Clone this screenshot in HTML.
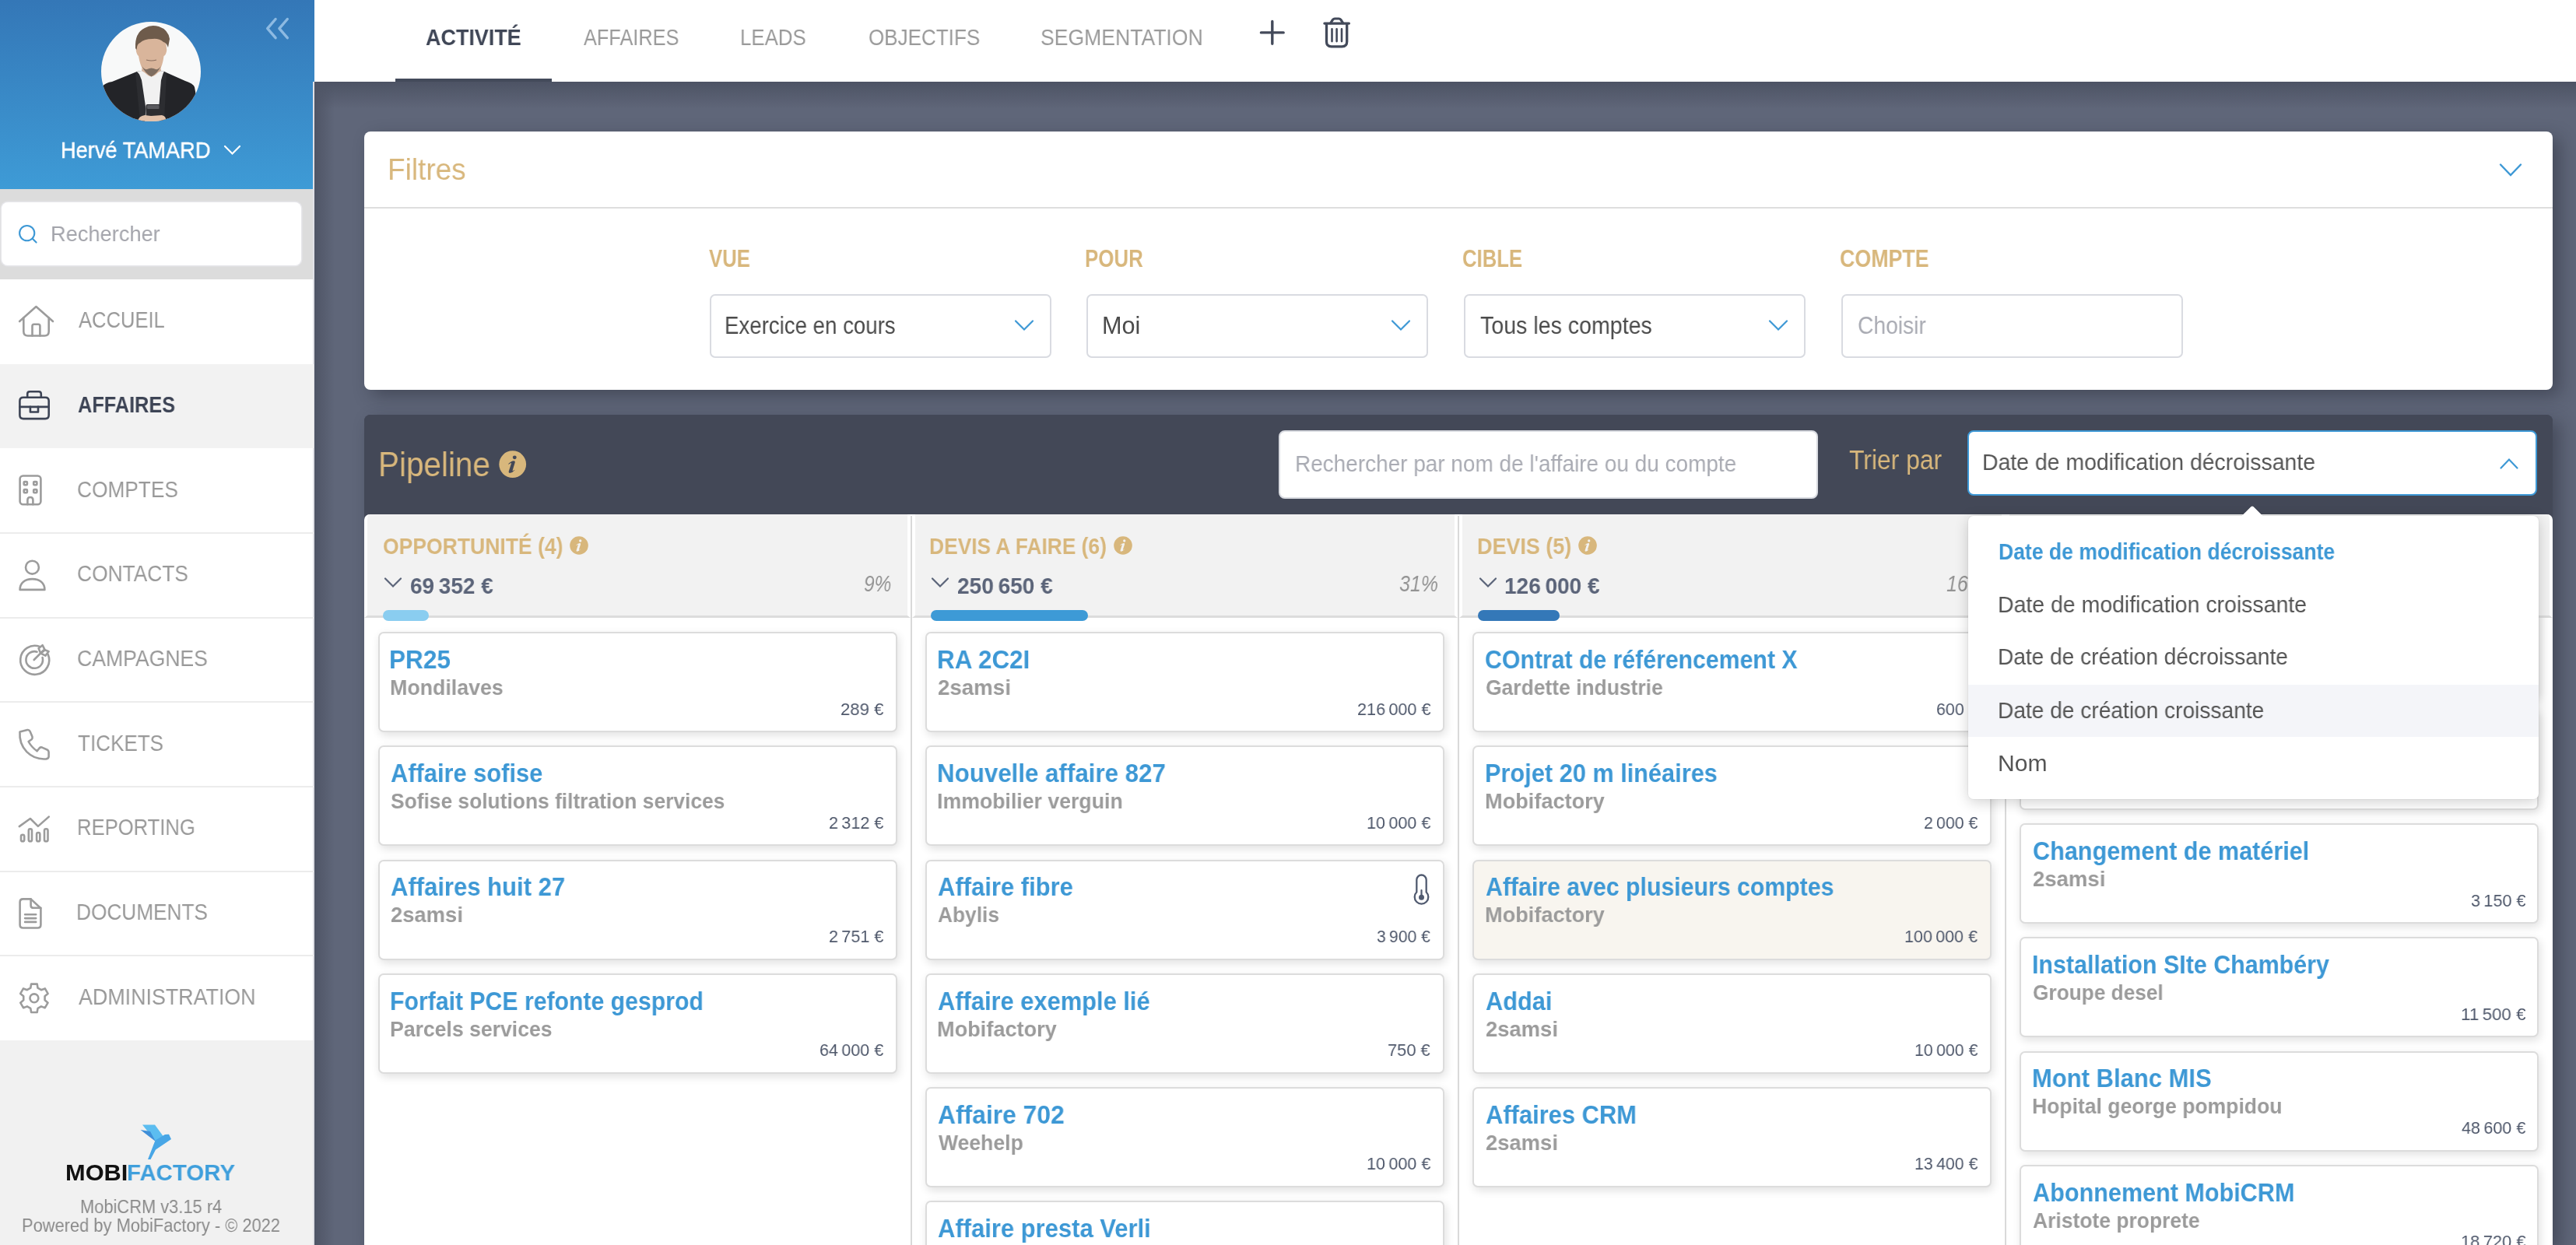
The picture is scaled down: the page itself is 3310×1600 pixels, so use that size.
<!DOCTYPE html>
<html><head><meta charset="utf-8"><style>
html,body{margin:0;padding:0;}
body{width:3310px;height:1600px;position:relative;overflow:hidden;background:#5f6679;font-family:"Liberation Sans",sans-serif;}
.r{position:absolute;}
.t{position:absolute;white-space:nowrap;line-height:1;transform-origin:0 0;will-change:transform;}
</style></head><body>
<div class="r" style="left:404.00px;top:105.00px;width:2906.00px;height:1495.00px;background:#5f6679;"></div>
<div class="r" style="left:404.00px;top:105.00px;width:2906.00px;height:35.00px;background:linear-gradient(#4d5364,rgba(95,102,121,0));"></div>
<div class="r" style="left:404.00px;top:105.00px;width:26.00px;height:1495.00px;background:linear-gradient(90deg,#4f5566,rgba(95,102,121,0));"></div>
<div class="r" style="left:404.00px;top:0.00px;width:2906.00px;height:105.00px;background:#fff;"></div>
<div class="r" style="left:508.00px;top:101.00px;width:201.00px;height:4.00px;background:#434a5a;"></div>
<div class="t" style="left:547.30px;top:32.89px;font-size:29.420px;color:#3f4656;font-weight:700;transform:scaleX(0.9160);">ACTIVITÉ</div>
<div class="t" style="left:749.65px;top:32.89px;font-size:29.420px;color:#9a9a9a;transform:scaleX(0.8611);">AFFAIRES</div>
<div class="t" style="left:951.38px;top:32.89px;font-size:29.420px;color:#9a9a9a;transform:scaleX(0.8789);">LEADS</div>
<div class="t" style="left:1115.55px;top:32.89px;font-size:29.420px;color:#9a9a9a;transform:scaleX(0.8850);">OBJECTIFS</div>
<div class="t" style="left:1337.38px;top:32.89px;font-size:29.420px;color:#9a9a9a;transform:scaleX(0.9039);">SEGMENTATION</div>
<svg class="r" style="left:1610px;top:17px" width="50" height="50" viewBox="0 0 50 50"><path d="M24.8 10.5V39.3M10.4 24.9H39.2" stroke="#434a5a" stroke-width="3.4" stroke-linecap="round" fill="none"/></svg>
<svg class="r" style="left:1690px;top:15px" width="60" height="60" viewBox="0 0 60 60"><g stroke="#434a5a" fill="none" stroke-linecap="round" stroke-linejoin="round"><path d="M11.9 15.1H43.4" stroke-width="3.3"/><path d="M19.8 14.6L22.6 10.2Q23.6 9 25 9H30.4Q31.8 9 32.8 10.2L35.6 14.6" stroke-width="3.2"/><path d="M14.5 17V38.5Q14.5 44.8 20.8 44.8H34.4Q40.7 44.8 40.7 38.5V17" stroke-width="3.3"/><path d="M21.5 22.4V38.1M27.6 22.4V38.1M34 22.4V38.1" stroke-width="2.6"/></g></svg>
<div class="r" style="left:0.00px;top:0.00px;width:404.00px;height:243.00px;background:linear-gradient(#3477b7,#3e9bd6);"></div>
<div class="r" style="left:0.00px;top:243.00px;width:404.00px;height:116.00px;background:#dcdcdc;"></div>
<div class="r" style="left:0.00px;top:359.00px;width:404.00px;height:978.00px;background:#fff;"></div>
<div class="r" style="left:0.00px;top:1337.00px;width:404.00px;height:263.00px;background:#f1f1f1;"></div>
<div class="r" style="left:402.00px;top:105.00px;width:2.00px;height:1495.00px;background:#e0e1e7;"></div>
<svg class="r" style="left:338px;top:20px" width="38" height="34" viewBox="0 0 38 34"><path d="M16.1 4.5L5.7 16.7L16.1 28.6M31.3 4.5L20.9 16.7L31.3 28.6" stroke="#8dbae2" stroke-width="3.4" fill="none" stroke-linecap="round" stroke-linejoin="round"/></svg>
<svg class="r" style="left:130px;top:28px" width="128" height="128" viewBox="0 0 128 128">
<defs><clipPath id="cc"><circle cx="64" cy="64" r="64"/></clipPath></defs>
<circle cx="64" cy="64" r="64" fill="#f8f9f9"/>
<g clip-path="url(#cc)">
<path d="M0 84Q6 78 14 77L46 64L64 62L81 64L108 76Q118 79 120 84L128 128H0Z" fill="#232428"/>
<path d="M47.5 63.5L64 82L80.5 63.5L75 128H56Z" fill="#f1f1f1"/>
<path d="M47.5 63.5L52 75L57.5 112L56 128H50L44 66Z" fill="#2c2d31"/>
<path d="M80.5 63.5L77 75L74 112L75 128H81L84 66Z" fill="#2c2d31"/>
<path d="M46 64L64 61L81 64L64 84Z" fill="#f1f1f1"/><path d="M53 56L76 56L77 63L64 70L52 63Z" fill="#d2b39e"/>
<path d="M45 34Q44 38 47 43L48 44Q50 56 54 62Q59 70 64.5 70.5Q70 70 75 62Q79 56 80.5 44L82 43Q85 38 84 34Q84 18 64 16Q45 18 45 34Z" fill="#d9b59b"/>
<path d="M52 56Q56 66 64.5 70.5Q73 66 77 56Q74 62 70 61Q64.5 58 59 61Q55 62 52 56Z" fill="#7e6d60"/>
<path d="M58 49Q64.5 51 71 49" stroke="#8a6f60" stroke-width="1.2" fill="none"/>
<path d="M44 34Q43 14 56 8Q64 3 74 6Q86 10 88 22L86 33Q84 27 80 26Q74 21 66 22Q55 22 50 27Q46 28 45.5 36Z" fill="#6e5b4b"/>
<rect x="57.5" y="106" width="18.5" height="16" rx="2" fill="#2e2e31"/>
<rect x="59" y="107" width="15.5" height="5" rx="1" fill="#5a5a5e"/>
<path d="M47 128Q48 121 56 120L64 121L78 120Q84 121 83 128Z" fill="#e3c2aa"/>
</g></svg>
<div class="t" style="left:78.07px;top:179.39px;font-size:28.841px;color:#ffffff;transform:scaleX(0.9435);-webkit-text-stroke:0.4px #fff;">Hervé TAMARD</div>
<svg class="r" style="left:286px;top:185px" width="25" height="16" viewBox="0 0 25 16"><path d="M3 3L12.5 12.5L22 3" stroke="#fff" stroke-width="2.2" fill="none" stroke-linecap="round"/></svg>
<div class="r" style="left:2.00px;top:260.00px;width:385.00px;height:81.00px;background:#fff;border-radius:8px;box-shadow:0 0 0 1.5px #e6e6ea;"></div>
<svg class="r" style="left:22px;top:287px" width="28" height="28" viewBox="0 0 28 28"><circle cx="12.7" cy="12.6" r="9.6" stroke="#3d98d5" stroke-width="2.1" fill="none"/><path d="M19.8 19.8L24.6 24.6" stroke="#3d98d5" stroke-width="2.1" stroke-linecap="round"/></svg>
<div class="t" style="left:64.57px;top:287.12px;font-size:27.971px;color:#a3a4ab;transform:scaleX(0.9731);">Rechercher</div>
<div class="r" style="left:0.00px;top:467.67px;width:403.00px;height:108.67px;background:#f2f2f2;"></div>
<div class="r" style="left:0.00px;top:684.00px;width:403.00px;height:2.00px;background:#ececec;"></div>
<div class="r" style="left:0.00px;top:792.67px;width:403.00px;height:2.00px;background:#ececec;"></div>
<div class="r" style="left:0.00px;top:901.33px;width:403.00px;height:2.00px;background:#ececec;"></div>
<div class="r" style="left:0.00px;top:1010.00px;width:403.00px;height:2.00px;background:#ececec;"></div>
<div class="r" style="left:0.00px;top:1118.67px;width:403.00px;height:2.00px;background:#ececec;"></div>
<div class="r" style="left:0.00px;top:1227.33px;width:403.00px;height:2.00px;background:#ececec;"></div>
<div class="t" style="left:100.55px;top:397.35px;font-size:29.275px;color:#999999;transform:scaleX(0.8730);">ACCUEIL</div>
<div class="t" style="left:99.94px;top:506.02px;font-size:29.275px;color:#3d4455;font-weight:700;transform:scaleX(0.8638);">AFFAIRES</div>
<div class="t" style="left:99.29px;top:614.68px;font-size:29.275px;color:#999999;transform:scaleX(0.8973);">COMPTES</div>
<div class="t" style="left:99.28px;top:723.35px;font-size:29.275px;color:#999999;transform:scaleX(0.8998);">CONTACTS</div>
<div class="t" style="left:99.27px;top:832.02px;font-size:29.275px;color:#999999;transform:scaleX(0.9083);">CAMPAGNES</div>
<div class="t" style="left:100.03px;top:940.68px;font-size:29.275px;color:#999999;transform:scaleX(0.8901);">TICKETS</div>
<div class="t" style="left:98.50px;top:1049.35px;font-size:29.275px;color:#999999;transform:scaleX(0.8750);">REPORTING</div>
<div class="t" style="left:98.45px;top:1158.02px;font-size:29.275px;color:#999999;transform:scaleX(0.8959);">DOCUMENTS</div>
<div class="t" style="left:100.55px;top:1266.68px;font-size:29.275px;color:#999999;transform:scaleX(0.9168);">ADMINISTRATION</div>
<svg class="r" style="left:0;top:0" width="404" height="1600" viewBox="0 0 404 1600"><g fill="none" stroke-width="2.6" stroke-linejoin="round" stroke-linecap="round"><g stroke="#9c9c9c"><path d="M25.1 413L46.4 394L68 413"/><path d="M30.3 408.6V426Q30.3 431.5 35.8 431.5H57.2Q62.7 431.5 62.7 426V408.6"/><path d="M41.5 431.5V419Q41.5 416.8 43.7 416.8H49.2Q51.4 416.8 51.4 419V431.5"/></g><g stroke="#3d4455"><path d="M30 510.7H58.1Q62.7 510.7 62.7 515.3V533.5Q62.7 538.1 58.1 538.1H30Q25.4 538.1 25.4 533.5V515.3Q25.4 510.7 30 510.7Z"/><path d="M35.2 510.7V506.2Q35.2 503.2 38.2 503.2H49.8Q52.8 503.2 52.8 506.2V510.7"/><path d="M25.4 522.9H62.7"/><path d="M38.9 522.9V529.5H49V522.9"/></g><g stroke="#9c9c9c"><rect x="25.6" y="611.5" width="26.8" height="36.7" rx="4"/><rect x="30.7" y="619.1" width="4.2" height="4.2" rx="1"/><rect x="43.2" y="619.1" width="4.2" height="4.2" rx="1"/><rect x="30.7" y="629.1" width="4.2" height="4.2" rx="1"/><rect x="43.2" y="629.1" width="4.2" height="4.2" rx="1"/><path d="M35.4 648.2V642.5Q35.4 639 38.9 639Q42.4 639 42.4 642.5V648.2"/></g><g stroke="#9c9c9c"><circle cx="41.45" cy="729.15" r="8.45"/><path d="M25.6 757.9C25.6 749 32 744.1 41.5 744.1C51 744.1 57.4 749 57.4 757.9Z"/></g><g stroke="#9c9c9c"><path d="M61.7 841A18.5 18.5 0 1 1 51 830.9"/><path d="M54.6 845A10.8 10.8 0 1 1 47.5 837.7"/><path d="M43.7 848L56 835.7"/><path d="M52.2 839.5L49.6 833.2L54.6 829.2L57.6 835.2Z"/><path d="M52.2 839.5L57.6 835.2L62.6 837.2L58.4 842.6Z"/></g><g stroke="#9c9c9c"><path d="M25.5 940.5L35.2 938Q37.5 937.6 38.5 939.8L41.5 946.8Q42.1 948.8 40.6 950.2L36.6 953Q40.5 960.2 47.6 965.3L50.6 961.5Q52 960 54.1 960.6L60.6 963.5Q62.6 964.5 62.6 966.6L62.6 972.5Q62.2 975.1 59.2 975.4Q44.5 976.5 34.3 966.2Q24.3 955.6 25.5 940.5Z"/></g><g stroke="#9c9c9c"><path d="M24.8 1062.1L38.9 1052L48.9 1061.9L62.8 1049.6"/><rect x="27" y="1072.7" width="4.2" height="8.6" rx="2.1"/><rect x="36.8" y="1065.2" width="4.2" height="16.1" rx="2.1"/><rect x="47.1" y="1070" width="4.2" height="11.3" rx="2.1"/><rect x="57" y="1065.2" width="4.5" height="16.1" rx="2.1"/></g><g stroke="#9c9c9c"><path d="M29.6 1155.4H39.6L52.4 1167.2V1188.5Q52.4 1192.5 48.4 1192.5H29.6Q25.6 1192.5 25.6 1188.5V1159.4Q25.6 1155.4 29.6 1155.4Z"/><path d="M39.6 1155.4V1163.4Q39.6 1166.8 43 1166.8H52.4"/><path d="M32.1 1175.3H46.2M32.1 1180.1H46.2M32.1 1184.9H46.2"/></g><g stroke="#9c9c9c"><circle cx="43.9" cy="1282.8" r="5.45"/><path d="M39.26 1269.70 L40.13 1264.59 L47.67 1264.59 L48.54 1269.70 L52.93 1272.23 L57.79 1270.43 L61.56 1276.96 L57.57 1280.27 L57.57 1285.33 L61.56 1288.64 L57.79 1295.17 L52.93 1293.37 L48.54 1295.90 L47.67 1301.01 L40.13 1301.01 L39.26 1295.90 L34.87 1293.37 L30.01 1295.17 L26.24 1288.64 L30.23 1285.33 L30.23 1280.27 L26.24 1276.96 L30.01 1270.43 L34.87 1272.23Z"/></g></g></svg>
<svg class="r" style="left:179.6px;top:1444.8px" width="41" height="46" viewBox="0 0 41 46">
<path d="M3 0.5L19 0.5L31 17L20 22Z" fill="#5cbdf0"/>
<path d="M0.5 7L13 9L20 22Z" fill="#3f8fd8"/>
<path d="M19.5 20.5L32 13L37 12.8L40 19L20 32.5L13.5 45H10Z" fill="#48a6e6"/>
</svg>
<div class="t" style="left:83.77px;top:1492.10px;font-size:30.000px;color:#111111;font-weight:700;transform:scaleX(1.0255);">MOBI</div>
<div class="t" style="left:162.86px;top:1492.10px;font-size:30.000px;color:#3f9fdc;font-weight:700;transform:scaleX(0.9813);">FACTORY</div>
<div class="t" style="left:102.61px;top:1538.56px;font-size:24.638px;color:#8a8a8a;transform:scaleX(0.8877);">MobiCRM v3.15 r4</div>
<div class="t" style="left:27.51px;top:1563.46px;font-size:24.638px;color:#8a8a8a;transform:scaleX(0.8877);">Powered by MobiFactory - © 2022</div>
<div class="r" style="left:468.00px;top:169.00px;width:2812.00px;height:331.50px;background:#fff;border-radius:8px;box-shadow:9px 8px 22px rgba(25,28,40,0.38);"></div>
<div class="r" style="left:468.00px;top:266.00px;width:2812.00px;height:2.00px;background:#dedede;"></div>
<div class="t" style="left:497.97px;top:199.26px;font-size:38.406px;color:#d8b77c;transform:scaleX(0.9629);">Filtres</div>
<svg class="r" style="left:3210px;top:208px" width="32" height="22" viewBox="0 0 32 22"><path d="M3 3.5L16 17L29 3.5" stroke="#3d98d5" stroke-width="2.4" fill="none" stroke-linecap="round"/></svg>
<div class="t" style="left:910.85px;top:316.73px;font-size:30.435px;color:#d8b77c;font-weight:700;transform:scaleX(0.8459);">VUE</div>
<div class="r" style="left:911.50px;top:377.60px;width:439.00px;height:82.40px;background:#fff;border:2px solid #d9dbe1;border-radius:7px;box-sizing:border-box;"></div>
<div class="t" style="left:931.43px;top:403.43px;font-size:30.435px;color:#4b4b4b;transform:scaleX(0.9085);">Exercice en cours</div>
<svg class="r" style="left:1301.5px;top:409px" width="28" height="18" viewBox="0 0 28 18"><path d="M3 3.5L14 14.5L25 3.5" stroke="#3d98d5" stroke-width="2.2" fill="none" stroke-linecap="round"/></svg>
<div class="t" style="left:1393.99px;top:316.73px;font-size:30.435px;color:#d8b77c;font-weight:700;transform:scaleX(0.8507);">POUR</div>
<div class="r" style="left:1396.20px;top:377.60px;width:439.00px;height:82.40px;background:#fff;border:2px solid #d9dbe1;border-radius:7px;box-sizing:border-box;"></div>
<div class="t" style="left:1415.89px;top:403.43px;font-size:30.435px;color:#4b4b4b;transform:scaleX(1.0068);">Moi</div>
<svg class="r" style="left:1786.2px;top:409px" width="28" height="18" viewBox="0 0 28 18"><path d="M3 3.5L14 14.5L25 3.5" stroke="#3d98d5" stroke-width="2.2" fill="none" stroke-linecap="round"/></svg>
<div class="t" style="left:1879.37px;top:316.73px;font-size:30.435px;color:#d8b77c;font-weight:700;transform:scaleX(0.8434);">CIBLE</div>
<div class="r" style="left:1880.90px;top:377.60px;width:439.00px;height:82.40px;background:#fff;border:2px solid #d9dbe1;border-radius:7px;box-sizing:border-box;"></div>
<div class="t" style="left:1901.97px;top:403.43px;font-size:30.435px;color:#4b4b4b;transform:scaleX(0.9393);">Tous les comptes</div>
<svg class="r" style="left:2270.9px;top:409px" width="28" height="18" viewBox="0 0 28 18"><path d="M3 3.5L14 14.5L25 3.5" stroke="#3d98d5" stroke-width="2.2" fill="none" stroke-linecap="round"/></svg>
<div class="t" style="left:2364.03px;top:316.73px;font-size:30.435px;color:#d8b77c;font-weight:700;transform:scaleX(0.8805);">COMPTE</div>
<div class="r" style="left:2365.60px;top:377.60px;width:439.00px;height:82.40px;background:#fff;border:2px solid #d9dbe1;border-radius:7px;box-sizing:border-box;"></div>
<div class="t" style="left:2386.59px;top:403.43px;font-size:30.435px;color:#a9abb3;transform:scaleX(0.9283);">Choisir</div>
<div class="r" style="left:468.00px;top:533.00px;width:2812.00px;height:1067.00px;background:#434857;border-radius:8px 8px 0 0;box-shadow:9px 8px 22px rgba(25,28,40,0.38);"></div>
<div class="r" style="left:468.00px;top:650.00px;width:2812.00px;height:950.00px;background:#fff;"></div>
<div class="r" style="left:468.00px;top:533.00px;width:2812.00px;height:128.00px;background:#434857;border-radius:8px 8px 0 0;"></div>
<div class="r" style="left:468.00px;top:660.00px;width:10.00px;height:10.00px;background:#434857;"></div>
<div class="r" style="left:3270.00px;top:660.00px;width:10.00px;height:10.00px;background:#434857;"></div>
<div class="t" style="left:486.38px;top:576.44px;font-size:43.478px;color:#d8b77c;transform:scaleX(0.9302);">Pipeline</div>
<svg class="r" style="left:641.30px;top:579.20px" width="35.40" height="35.40" viewBox="0 0 36 36"><circle cx="18" cy="18" r="17.7" fill="#d8b77c"/><circle cx="20.6" cy="9" r="2.5" fill="#434857"/><path d="M12.3 17.6Q15.6 13.6 19.6 13.4Q21.6 13.4 21.1 15.6L18 25.6Q17.6 27.2 19.2 26.2L20.4 25.1L20.7 25.6Q17.4 29.4 14.2 29.5Q12.4 29.5 12.9 27.3L16.2 17Q16.5 15.8 15.3 16.6L12.7 18.1Z" fill="#434857"/></svg>
<div class="r" style="left:1643.00px;top:553.00px;width:693.00px;height:87.50px;background:#fff;border:2px solid #d9dbe1;border-radius:8px;box-sizing:border-box;"></div>
<div class="t" style="left:1664.11px;top:581.40px;font-size:30.000px;color:#a9abb3;transform:scaleX(0.9315);">Rechercher par nom de l&#x27;affaire ou du compte</div>
<div class="t" style="left:2375.70px;top:573.92px;font-size:35.507px;color:#d8b77c;transform:scaleX(0.8977);">Trier par</div>
<div class="r" style="left:2527.50px;top:553.40px;width:732.20px;height:83.80px;background:#fff;border:2.5px solid #3d98d5;border-radius:8px;box-sizing:border-box;"></div>
<div class="t" style="left:2547.17px;top:580.36px;font-size:28.986px;color:#555555;transform:scaleX(0.9809);">Date de modification décroissante</div>
<svg class="r" style="left:3210px;top:586px" width="28" height="20" viewBox="0 0 28 20"><path d="M3.5 15.5L14 4.5L24.5 15.5" stroke="#3d98d5" stroke-width="2.2" fill="none" stroke-linecap="round"/></svg>
<div class="r" style="left:468px;top:794px;width:703px;height:806px;overflow:hidden;">
<div class="r" style="left:17.6px;top:18.10px;width:667.5px;height:129px;background:#fff;border:2px solid #dcdcdc;border-radius:7px;box-sizing:border-box;box-shadow:2px 4px 12px rgba(0,0,0,0.12);"></div>
<div class="t" style="left:32.42px;top:38.06px;font-size:32.754px;color:#3d98d5;font-weight:700;transform:scaleX(0.9636);">PR25</div>
<div class="t" style="left:32.73px;top:74.96px;font-size:28.406px;color:#9b9b9b;font-weight:700;transform:scaleX(0.9427);">Mondilaves</div>
<div class="t" style="left:611.69px;top:106.68px;font-size:22.609px;color:#4f586b;transform:scaleX(0.9779);">289 €</div>
<div class="r" style="left:17.6px;top:164.30px;width:667.5px;height:129px;background:#fff;border:2px solid #dcdcdc;border-radius:7px;box-sizing:border-box;box-shadow:2px 4px 12px rgba(0,0,0,0.12);"></div>
<div class="t" style="left:33.70px;top:184.26px;font-size:32.754px;color:#3d98d5;font-weight:700;transform:scaleX(0.9413);">Affaire sofise</div>
<div class="t" style="left:33.71px;top:221.16px;font-size:28.406px;color:#9b9b9b;font-weight:700;transform:scaleX(0.9287);">Sofise solutions filtration services</div>
<div class="t" style="left:596.62px;top:252.88px;font-size:22.609px;color:#4f586b;transform:scaleX(0.9555);">2 312 €</div>
<div class="r" style="left:17.6px;top:310.50px;width:667.5px;height:129px;background:#fff;border:2px solid #dcdcdc;border-radius:7px;box-sizing:border-box;box-shadow:2px 4px 12px rgba(0,0,0,0.12);"></div>
<div class="t" style="left:33.69px;top:330.46px;font-size:32.754px;color:#3d98d5;font-weight:700;transform:scaleX(0.9470);">Affaires huit 27</div>
<div class="t" style="left:33.57px;top:367.36px;font-size:28.406px;color:#9b9b9b;font-weight:700;transform:scaleX(0.9647);">2samsi</div>
<div class="t" style="left:596.62px;top:399.08px;font-size:22.609px;color:#4f586b;transform:scaleX(0.9555);">2 751 €</div>
<div class="r" style="left:17.6px;top:456.70px;width:667.5px;height:129px;background:#fff;border:2px solid #dcdcdc;border-radius:7px;box-sizing:border-box;box-shadow:2px 4px 12px rgba(0,0,0,0.12);"></div>
<div class="t" style="left:32.51px;top:476.66px;font-size:32.754px;color:#3d98d5;font-weight:700;transform:scaleX(0.9224);">Forfait PCE refonte gesprod</div>
<div class="t" style="left:32.74px;top:513.56px;font-size:28.406px;color:#9b9b9b;font-weight:700;transform:scaleX(0.9368);">Parcels services</div>
<div class="t" style="left:584.82px;top:545.28px;font-size:22.609px;color:#4f586b;transform:scaleX(0.9530);">64 000 €</div>
</div>
<div class="r" style="left:468.00px;top:661.00px;width:702.00px;height:132.50px;background:#f2f2f2;border-left:4px solid #fff;border-right:4px solid #fff;border-bottom:3px solid #dcdcdc;box-sizing:border-box;border-top-left-radius:7px;"></div>
<div class="r" style="left:1170.00px;top:662.50px;width:2.00px;height:937.50px;background:#d9d9d9;"></div>
<div class="t" style="left:491.74px;top:687.92px;font-size:29.275px;color:#d8b77c;font-weight:700;transform:scaleX(0.9068);">OPPORTUNITÉ (4)</div>
<svg class="r" style="left:732.00px;top:689.00px" width="24.00" height="24.00" viewBox="0 0 36 36"><circle cx="18" cy="18" r="17.7" fill="#d8b77c"/><circle cx="20.6" cy="9" r="2.5" fill="#f2f2f2"/><path d="M12.3 17.6Q15.6 13.6 19.6 13.4Q21.6 13.4 21.1 15.6L18 25.6Q17.6 27.2 19.2 26.2L20.4 25.1L20.7 25.6Q17.4 29.4 14.2 29.5Q12.4 29.5 12.9 27.3L16.2 17Q16.5 15.8 15.3 16.6L12.7 18.1Z" fill="#f2f2f2"/></svg>
<svg class="r" style="left:492.0px;top:740px" width="26" height="18" viewBox="0 0 26 18"><path d="M3 3.5L13 13.5L23 3.5" stroke="#5b6479" stroke-width="2.2" fill="none" stroke-linecap="round"/></svg>
<div class="t" style="left:526.99px;top:739.26px;font-size:28.986px;color:#5b6479;font-weight:700;transform:scaleX(0.9653);">69 352 €</div>
<div class="t" style="left:1109.97px;top:734.98px;font-size:30.145px;color:#939393;font-style:italic;transform:scaleX(0.8124);">9%</div>
<div class="r" style="left:492.00px;top:784.00px;width:59.00px;height:14.00px;background:#8acdf0;border-radius:7px;"></div>
<div class="r" style="left:1171px;top:794px;width:703px;height:806px;overflow:hidden;">
<div class="r" style="left:17.6px;top:18.10px;width:667.5px;height:129px;background:#fff;border:2px solid #dcdcdc;border-radius:7px;box-sizing:border-box;box-shadow:2px 4px 12px rgba(0,0,0,0.12);"></div>
<div class="t" style="left:32.63px;top:38.06px;font-size:32.754px;color:#3d98d5;font-weight:700;transform:scaleX(0.9594);">RA 2C2I</div>
<div class="t" style="left:33.76px;top:74.96px;font-size:28.406px;color:#9b9b9b;font-weight:700;transform:scaleX(0.9754);">2samsi</div>
<div class="t" style="left:572.62px;top:106.68px;font-size:22.609px;color:#4f586b;transform:scaleX(0.9563);">216 000 €</div>
<div class="r" style="left:17.6px;top:164.30px;width:667.5px;height:129px;background:#fff;border:2px solid #dcdcdc;border-radius:7px;box-sizing:border-box;box-shadow:2px 4px 12px rgba(0,0,0,0.12);"></div>
<div class="t" style="left:32.64px;top:184.26px;font-size:32.754px;color:#3d98d5;font-weight:700;transform:scaleX(0.9550);">Nouvelle affaire 827</div>
<div class="t" style="left:32.94px;top:221.16px;font-size:28.406px;color:#9b9b9b;font-weight:700;transform:scaleX(0.9396);">Immobilier verguin</div>
<div class="t" style="left:584.76px;top:252.88px;font-size:22.609px;color:#4f586b;transform:scaleX(0.9549);">10 000 €</div>
<div class="r" style="left:17.6px;top:310.50px;width:667.5px;height:129px;background:#fff;border:2px solid #dcdcdc;border-radius:7px;box-sizing:border-box;box-shadow:2px 4px 12px rgba(0,0,0,0.12);"></div>
<div class="t" style="left:33.89px;top:330.46px;font-size:32.754px;color:#3d98d5;font-weight:700;transform:scaleX(0.9464);">Affaire fibre</div>
<div class="t" style="left:34.02px;top:367.36px;font-size:28.406px;color:#9b9b9b;font-weight:700;transform:scaleX(0.9263);">Abylis</div>
<div class="t" style="left:598.20px;top:399.08px;font-size:22.609px;color:#4f586b;transform:scaleX(0.9354);">3 900 €</div>
<svg class="r" style="left:629.00px;top:321.00px" width="50" height="55" viewBox="0 0 50 55"><path d="M20.3 31.55V15.7A6.2 6.2 0 0 1 32.7 15.7V31.55A8.8 8.8 0 1 1 20.3 31.55Z" stroke="#515b70" stroke-width="2.3" fill="none"/><circle cx="26.5" cy="38.2" r="3.5" fill="#515b70"/><path d="M26.5 29V36" stroke="#515b70" stroke-width="2.2" stroke-linecap="round"/></svg>
<div class="r" style="left:17.6px;top:456.70px;width:667.5px;height:129px;background:#fff;border:2px solid #dcdcdc;border-radius:7px;box-sizing:border-box;box-shadow:2px 4px 12px rgba(0,0,0,0.12);"></div>
<div class="t" style="left:33.90px;top:476.66px;font-size:32.754px;color:#3d98d5;font-weight:700;transform:scaleX(0.9419);">Affaire exemple lié</div>
<div class="t" style="left:32.91px;top:513.56px;font-size:28.406px;color:#9b9b9b;font-weight:700;transform:scaleX(0.9559);">Mobifactory</div>
<div class="t" style="left:612.46px;top:545.28px;font-size:22.609px;color:#4f586b;transform:scaleX(0.9660);">750 €</div>
<div class="r" style="left:17.6px;top:602.90px;width:667.5px;height:129px;background:#fff;border:2px solid #dcdcdc;border-radius:7px;box-sizing:border-box;box-shadow:2px 4px 12px rgba(0,0,0,0.12);"></div>
<div class="t" style="left:33.87px;top:622.86px;font-size:32.754px;color:#3d98d5;font-weight:700;transform:scaleX(0.9719);">Affaire 702</div>
<div class="t" style="left:34.65px;top:659.76px;font-size:28.406px;color:#9b9b9b;font-weight:700;transform:scaleX(0.9353);">Weehelp</div>
<div class="t" style="left:584.76px;top:691.48px;font-size:22.609px;color:#4f586b;transform:scaleX(0.9549);">10 000 €</div>
<div class="r" style="left:17.6px;top:749.10px;width:667.5px;height:129px;background:#fff;border:2px solid #dcdcdc;border-radius:7px;box-sizing:border-box;box-shadow:2px 4px 12px rgba(0,0,0,0.12);"></div>
<div class="t" style="left:33.89px;top:769.06px;font-size:32.754px;color:#3d98d5;font-weight:700;transform:scaleX(0.9458);">Affaire presta Verli</div>
<div class="t" style="left:34.54px;top:805.96px;font-size:28.406px;color:#9b9b9b;font-weight:700;transform:scaleX(0.9350);">Verli</div>
<div class="t" style="left:595.66px;top:837.68px;font-size:22.609px;color:#4f586b;transform:scaleX(0.9700);">5 000 €</div>
</div>
<div class="r" style="left:1172.00px;top:661.00px;width:701.00px;height:132.50px;background:#f2f2f2;border-left:4px solid #fff;border-right:4px solid #fff;border-bottom:3px solid #dcdcdc;box-sizing:border-box;"></div>
<div class="r" style="left:1873.00px;top:662.50px;width:2.00px;height:937.50px;background:#d9d9d9;"></div>
<div class="t" style="left:1194.16px;top:687.92px;font-size:29.275px;color:#d8b77c;font-weight:700;transform:scaleX(0.9002);">DEVIS A FAIRE (6)</div>
<svg class="r" style="left:1430.80px;top:689.00px" width="24.00" height="24.00" viewBox="0 0 36 36"><circle cx="18" cy="18" r="17.7" fill="#d8b77c"/><circle cx="20.6" cy="9" r="2.5" fill="#f2f2f2"/><path d="M12.3 17.6Q15.6 13.6 19.6 13.4Q21.6 13.4 21.1 15.6L18 25.6Q17.6 27.2 19.2 26.2L20.4 25.1L20.7 25.6Q17.4 29.4 14.2 29.5Q12.4 29.5 12.9 27.3L16.2 17Q16.5 15.8 15.3 16.6L12.7 18.1Z" fill="#f2f2f2"/></svg>
<svg class="r" style="left:1195.0px;top:740px" width="26" height="18" viewBox="0 0 26 18"><path d="M3 3.5L13 13.5L23 3.5" stroke="#5b6479" stroke-width="2.2" fill="none" stroke-linecap="round"/></svg>
<div class="t" style="left:1230.04px;top:739.26px;font-size:28.986px;color:#5b6479;font-weight:700;transform:scaleX(0.9700);">250 650 €</div>
<div class="t" style="left:1798.40px;top:734.98px;font-size:30.145px;color:#939393;font-style:italic;transform:scaleX(0.8285);">31%</div>
<div class="r" style="left:1196.00px;top:784.00px;width:202.00px;height:14.00px;background:#3d9ad6;border-radius:7px;"></div>
<div class="r" style="left:1874px;top:794px;width:703px;height:806px;overflow:hidden;">
<div class="r" style="left:17.6px;top:18.10px;width:667.5px;height:129px;background:#fff;border:2px solid #dcdcdc;border-radius:7px;box-sizing:border-box;box-shadow:2px 4px 12px rgba(0,0,0,0.12);"></div>
<div class="t" style="left:34.49px;top:38.06px;font-size:32.754px;color:#3d98d5;font-weight:700;transform:scaleX(0.9229);">COntrat de référencement X</div>
<div class="t" style="left:34.64px;top:74.96px;font-size:28.406px;color:#9b9b9b;font-weight:700;transform:scaleX(0.9314);">Gardette industrie</div>
<div class="t" style="left:613.73px;top:106.68px;font-size:22.609px;color:#4f586b;transform:scaleX(0.9470);">600 €</div>
<div class="r" style="left:17.6px;top:164.30px;width:667.5px;height:129px;background:#fff;border:2px solid #dcdcdc;border-radius:7px;box-sizing:border-box;box-shadow:2px 4px 12px rgba(0,0,0,0.12);"></div>
<div class="t" style="left:33.67px;top:184.26px;font-size:32.754px;color:#3d98d5;font-weight:700;transform:scaleX(0.9380);">Projet 20 m linéaires</div>
<div class="t" style="left:33.91px;top:221.16px;font-size:28.406px;color:#9b9b9b;font-weight:700;transform:scaleX(0.9559);">Mobifactory</div>
<div class="t" style="left:597.94px;top:252.88px;font-size:22.609px;color:#4f586b;transform:scaleX(0.9417);">2 000 €</div>
<div class="r" style="left:17.6px;top:310.50px;width:667.5px;height:129px;background:#f8f5ef;border:2px solid #dcdcdc;border-radius:7px;box-sizing:border-box;box-shadow:2px 4px 12px rgba(0,0,0,0.12);"></div>
<div class="t" style="left:34.91px;top:330.46px;font-size:32.754px;color:#3d98d5;font-weight:700;transform:scaleX(0.9241);">Affaire avec plusieurs comptes</div>
<div class="t" style="left:33.91px;top:367.36px;font-size:28.406px;color:#9b9b9b;font-weight:700;transform:scaleX(0.9559);">Mobifactory</div>
<div class="t" style="left:573.26px;top:399.08px;font-size:22.609px;color:#4f586b;transform:scaleX(0.9518);">100 000 €</div>
<div class="r" style="left:17.6px;top:456.70px;width:667.5px;height:129px;background:#fff;border:2px solid #dcdcdc;border-radius:7px;box-sizing:border-box;box-shadow:2px 4px 12px rgba(0,0,0,0.12);"></div>
<div class="t" style="left:34.90px;top:476.66px;font-size:32.754px;color:#3d98d5;font-weight:700;transform:scaleX(0.9369);">Addai</div>
<div class="t" style="left:34.77px;top:513.56px;font-size:28.406px;color:#9b9b9b;font-weight:700;transform:scaleX(0.9647);">2samsi</div>
<div class="t" style="left:585.88px;top:545.28px;font-size:22.609px;color:#4f586b;transform:scaleX(0.9442);">10 000 €</div>
<div class="r" style="left:17.6px;top:602.90px;width:667.5px;height:129px;background:#fff;border:2px solid #dcdcdc;border-radius:7px;box-sizing:border-box;box-shadow:2px 4px 12px rgba(0,0,0,0.12);"></div>
<div class="t" style="left:34.90px;top:622.86px;font-size:32.754px;color:#3d98d5;font-weight:700;transform:scaleX(0.9432);">Affaires CRM</div>
<div class="t" style="left:34.77px;top:659.76px;font-size:28.406px;color:#9b9b9b;font-weight:700;transform:scaleX(0.9647);">2samsi</div>
<div class="t" style="left:585.88px;top:691.48px;font-size:22.609px;color:#4f586b;transform:scaleX(0.9442);">13 400 €</div>
</div>
<div class="r" style="left:1875.00px;top:661.00px;width:701.00px;height:132.50px;background:#f2f2f2;border-left:4px solid #fff;border-right:4px solid #fff;border-bottom:3px solid #dcdcdc;box-sizing:border-box;"></div>
<div class="r" style="left:2576.00px;top:662.50px;width:2.00px;height:937.50px;background:#d9d9d9;"></div>
<div class="t" style="left:1898.02px;top:687.92px;font-size:29.275px;color:#d8b77c;font-weight:700;transform:scaleX(0.9198);">DEVIS (5)</div>
<svg class="r" style="left:2027.80px;top:689.00px" width="24.00" height="24.00" viewBox="0 0 36 36"><circle cx="18" cy="18" r="17.7" fill="#d8b77c"/><circle cx="20.6" cy="9" r="2.5" fill="#f2f2f2"/><path d="M12.3 17.6Q15.6 13.6 19.6 13.4Q21.6 13.4 21.1 15.6L18 25.6Q17.6 27.2 19.2 26.2L20.4 25.1L20.7 25.6Q17.4 29.4 14.2 29.5Q12.4 29.5 12.9 27.3L16.2 17Q16.5 15.8 15.3 16.6L12.7 18.1Z" fill="#f2f2f2"/></svg>
<svg class="r" style="left:1899.2px;top:740px" width="26" height="18" viewBox="0 0 26 18"><path d="M3 3.5L13 13.5L23 3.5" stroke="#5b6479" stroke-width="2.2" fill="none" stroke-linecap="round"/></svg>
<div class="t" style="left:1933.46px;top:739.26px;font-size:28.986px;color:#5b6479;font-weight:700;transform:scaleX(0.9683);">126 000 €</div>
<div class="t" style="left:2501.35px;top:734.98px;font-size:30.145px;color:#939393;font-style:italic;transform:scaleX(0.8293);">16%</div>
<div class="r" style="left:1899.00px;top:784.00px;width:105.00px;height:14.00px;background:#3478b8;border-radius:7px;"></div>
<div class="r" style="left:2577px;top:794px;width:703px;height:806px;overflow:hidden;">
<div class="r" style="left:17.6px;top:-28.30px;width:667.5px;height:129px;background:#fff;border:2px solid #dcdcdc;border-radius:7px;box-sizing:border-box;box-shadow:2px 4px 12px rgba(0,0,0,0.12);"></div>
<div class="t" style="left:35.08px;top:-8.34px;font-size:32.754px;color:#3d98d5;font-weight:700;transform:scaleX(0.9400);">Site web</div>
<div class="t" style="left:34.25px;top:28.56px;font-size:28.406px;color:#9b9b9b;font-weight:700;transform:scaleX(0.9350);">Mobifactory</div>
<div class="t" style="left:597.26px;top:60.28px;font-size:22.609px;color:#4f586b;transform:scaleX(0.9700);">4 000 €</div>
<div class="r" style="left:17.6px;top:117.90px;width:667.5px;height:129px;background:#fff;border:2px solid #dcdcdc;border-radius:7px;box-sizing:border-box;box-shadow:2px 4px 12px rgba(0,0,0,0.12);"></div>
<div class="t" style="left:33.97px;top:137.86px;font-size:32.754px;color:#3d98d5;font-weight:700;transform:scaleX(0.9400);">Maintenance</div>
<div class="t" style="left:35.10px;top:174.76px;font-size:28.406px;color:#9b9b9b;font-weight:700;transform:scaleX(0.9350);">2samsi</div>
<div class="t" style="left:597.26px;top:206.48px;font-size:22.609px;color:#4f586b;transform:scaleX(0.9700);">2 500 €</div>
<div class="r" style="left:17.6px;top:264.10px;width:667.5px;height:129px;background:#fff;border:2px solid #dcdcdc;border-radius:7px;box-sizing:border-box;box-shadow:2px 4px 12px rgba(0,0,0,0.12);"></div>
<div class="t" style="left:34.78px;top:284.06px;font-size:32.754px;color:#3d98d5;font-weight:700;transform:scaleX(0.9339);">Changement de matériel</div>
<div class="t" style="left:35.06px;top:320.96px;font-size:28.406px;color:#9b9b9b;font-weight:700;transform:scaleX(0.9700);">2samsi</div>
<div class="t" style="left:598.18px;top:352.68px;font-size:22.609px;color:#4f586b;transform:scaleX(0.9575);">3 150 €</div>
<div class="r" style="left:17.6px;top:410.30px;width:667.5px;height:129px;background:#fff;border:2px solid #dcdcdc;border-radius:7px;box-sizing:border-box;box-shadow:2px 4px 12px rgba(0,0,0,0.12);"></div>
<div class="t" style="left:33.99px;top:430.26px;font-size:32.754px;color:#3d98d5;font-weight:700;transform:scaleX(0.9287);">Installation SIte Chambéry</div>
<div class="t" style="left:34.95px;top:467.16px;font-size:28.406px;color:#9b9b9b;font-weight:700;transform:scaleX(0.9244);">Groupe desel</div>
<div class="t" style="left:585.20px;top:498.88px;font-size:22.609px;color:#4f586b;transform:scaleX(0.9876);">11 500 €</div>
<div class="r" style="left:17.6px;top:556.50px;width:667.5px;height:129px;background:#fff;border:2px solid #dcdcdc;border-radius:7px;box-sizing:border-box;box-shadow:2px 4px 12px rgba(0,0,0,0.12);"></div>
<div class="t" style="left:33.95px;top:576.46px;font-size:32.754px;color:#3d98d5;font-weight:700;transform:scaleX(0.9463);">Mont Blanc MIS</div>
<div class="t" style="left:34.25px;top:613.36px;font-size:28.406px;color:#9b9b9b;font-weight:700;transform:scaleX(0.9348);">Hopital george pompidou</div>
<div class="t" style="left:586.43px;top:645.08px;font-size:22.609px;color:#4f586b;transform:scaleX(0.9542);">48 600 €</div>
<div class="r" style="left:17.6px;top:702.70px;width:667.5px;height:129px;background:#fff;border:2px solid #dcdcdc;border-radius:7px;box-sizing:border-box;box-shadow:2px 4px 12px rgba(0,0,0,0.12);"></div>
<div class="t" style="left:35.20px;top:722.66px;font-size:32.754px;color:#3d98d5;font-weight:700;transform:scaleX(0.9339);">Abonnement MobiCRM</div>
<div class="t" style="left:35.31px;top:759.56px;font-size:28.406px;color:#9b9b9b;font-weight:700;transform:scaleX(0.9317);">Aristote proprete</div>
<div class="t" style="left:585.24px;top:791.28px;font-size:22.609px;color:#4f586b;transform:scaleX(0.9680);">18 720 €</div>
</div>
<div class="r" style="left:2578.00px;top:661.00px;width:702.00px;height:132.50px;background:#f2f2f2;border-left:4px solid #fff;border-right:4px solid #fff;border-bottom:3px solid #dcdcdc;box-sizing:border-box;border-top-right-radius:7px;"></div>
<div class="t" style="left:2601.73px;top:687.92px;font-size:29.275px;color:#d8b77c;font-weight:700;transform:scaleX(0.9100);">GAGNÉ (6)</div>
<svg class="r" style="left:2752.80px;top:689.00px" width="24.00" height="24.00" viewBox="0 0 36 36"><circle cx="18" cy="18" r="17.7" fill="#d8b77c"/><circle cx="20.6" cy="9" r="2.5" fill="#f2f2f2"/><path d="M12.3 17.6Q15.6 13.6 19.6 13.4Q21.6 13.4 21.1 15.6L18 25.6Q17.6 27.2 19.2 26.2L20.4 25.1L20.7 25.6Q17.4 29.4 14.2 29.5Q12.4 29.5 12.9 27.3L16.2 17Q16.5 15.8 15.3 16.6L12.7 18.1Z" fill="#f2f2f2"/></svg>
<svg class="r" style="left:2602.0px;top:740px" width="26" height="18" viewBox="0 0 26 18"><path d="M3 3.5L13 13.5L23 3.5" stroke="#5b6479" stroke-width="2.2" fill="none" stroke-linecap="round"/></svg>
<div class="t" style="left:2637.05px;top:739.26px;font-size:28.986px;color:#5b6479;font-weight:700;transform:scaleX(0.9680);">95 000 €</div>
<div class="t" style="left:3204.35px;top:734.98px;font-size:30.145px;color:#939393;font-style:italic;transform:scaleX(0.8293);">12%</div>
<div class="r" style="left:2601.00px;top:784.00px;width:79.00px;height:14.00px;background:#2a5f98;border-radius:7px;"></div>
<div class="r" style="left:2528.8px;top:663px;width:733px;height:364px;background:#fff;border-radius:7px;box-shadow:0 4px 18px rgba(0,0,0,0.18),0 0 0 1px rgba(0,0,0,0.04);"></div>
<svg class="r" style="left:2878px;top:646px" width="32" height="20" viewBox="0 0 32 20"><path d="M3 16.5L14.6 5Q16 3.8 17.4 5L29 16.5L29 19H3Z" fill="#fff"/><path d="M3.2 15L14.6 4.4Q16 3.2 17.4 4.4L28.8 15" stroke="rgba(0,0,0,0.06)" stroke-width="1" fill="none"/></svg>
<div class="r" style="left:2528.80px;top:879.50px;width:733.00px;height:67.50px;background:#f4f5f9;"></div>
<div class="t" style="left:2567.75px;top:694.96px;font-size:28.986px;color:#3d98d5;font-weight:700;transform:scaleX(0.9162);">Date de modification décroissante</div>
<div class="t" style="left:2567.17px;top:762.66px;font-size:28.986px;color:#555555;transform:scaleX(0.9824);">Date de modification croissante</div>
<div class="t" style="left:2567.20px;top:829.66px;font-size:28.986px;color:#555555;transform:scaleX(0.9689);">Date de création décroissante</div>
<div class="t" style="left:2567.19px;top:898.76px;font-size:28.986px;color:#555555;transform:scaleX(0.9705);">Date de création croissante</div>
<div class="t" style="left:2567.03px;top:966.56px;font-size:28.986px;color:#555555;transform:scaleX(1.0382);">Nom</div>
</body></html>
